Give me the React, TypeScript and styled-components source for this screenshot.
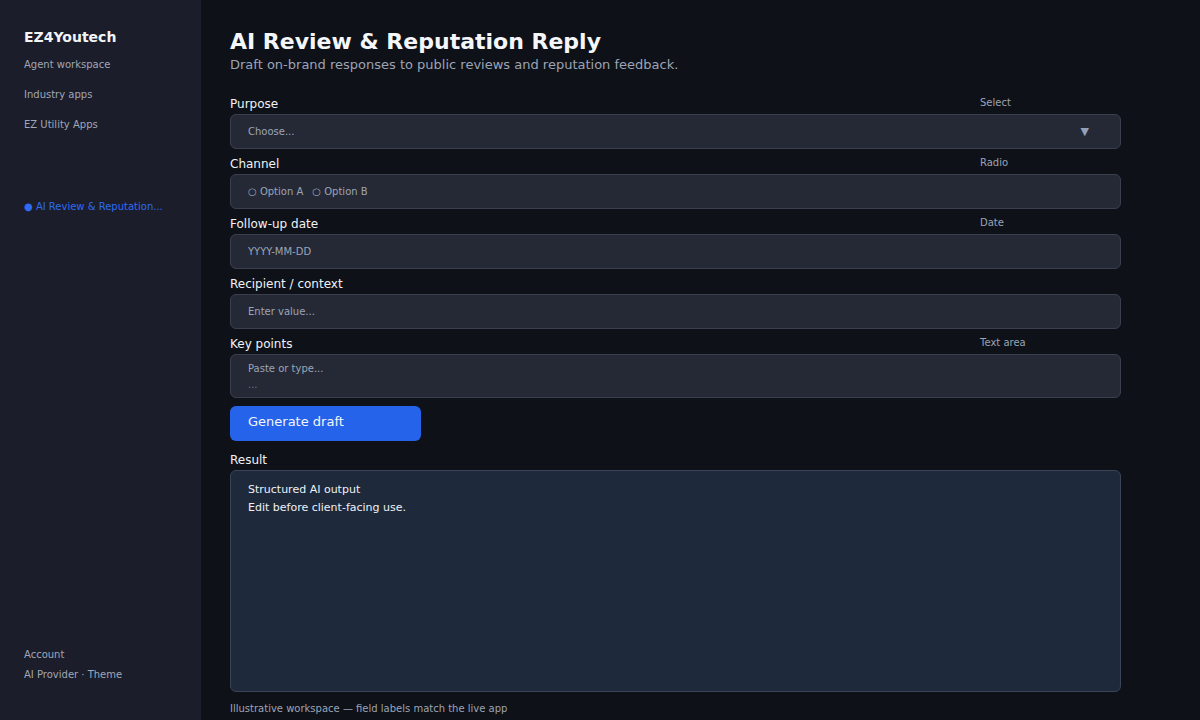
import styled, { createGlobalStyle } from 'styled-components';

const GlobalStyle = createGlobalStyle`
  html, body {
    margin: 0;
    padding: 0;
    background: #0e1118;
  }
  * {
    box-sizing: border-box;
  }
  body {
    font-family: "DejaVu Sans", "Liberation Sans", sans-serif;
    color: #e8eaf0;
  }
`;

const NavLinks = ['Agent workspace', 'Industry apps', 'EZ Utility Apps'];

type FieldDef = {
  label: string;
  kind: string;
  placeholder?: string;
  variant: 'select' | 'radio' | 'input' | 'textarea';
};

const Fields: FieldDef[] = [
  { label: 'Purpose', kind: 'Select', placeholder: 'Choose...', variant: 'select' },
  { label: 'Channel', kind: 'Radio', variant: 'radio' },
  { label: 'Follow-up date', kind: 'Date', placeholder: 'YYYY-MM-DD', variant: 'input' },
  { label: 'Recipient / context', kind: '', placeholder: 'Enter value...', variant: 'input' },
  { label: 'Key points', kind: 'Text area', placeholder: 'Paste or type...', variant: 'textarea' },
];

const FieldControl = ({ field }: { field: FieldDef }) => {
  if (field.variant === 'select') {
    return (
      <_Box>
        <_Placeholder>{field.placeholder}</_Placeholder>
        <_Arrow>▼</_Arrow>
      </_Box>
    );
  }
  if (field.variant === 'radio') {
    return (
      <_Box>
        <_RadioGroup>
          <_Radio>○ Option A</_Radio>
          <_Radio>○ Option B</_Radio>
        </_RadioGroup>
      </_Box>
    );
  }
  if (field.variant === 'textarea') {
    return (
      <_TextArea>
        <_Placeholder>{field.placeholder}</_Placeholder>
        <_Placeholder $dim>...</_Placeholder>
      </_TextArea>
    );
  }
  return (
    <_Box>
      <_Placeholder>{field.placeholder}</_Placeholder>
    </_Box>
  );
};

const App = () => {
  return (
    <_Layout>
      <GlobalStyle />
      <_Sidebar>
        <_Brand>EZ4Youtech</_Brand>
        {NavLinks.map((link) => (
          <_NavItem key={link}>{link}</_NavItem>
        ))}
        <_ActiveItem>● AI Review &amp; Reputation...</_ActiveItem>
        <_SidebarFooter>
          <_FooterLink>Account</_FooterLink>
          <_FooterLink>AI Provider · Theme</_FooterLink>
        </_SidebarFooter>
      </_Sidebar>
      <_Main>
        <_Title>AI Review &amp; Reputation Reply</_Title>
        <_Subtitle>Draft on-brand responses to public reviews and reputation feedback.</_Subtitle>
        <_Form>
          {Fields.map((field) => (
            <_Field key={field.label}>
              <_LabelRow>
                <_Label>{field.label}</_Label>
                <_Kind>{field.kind}</_Kind>
              </_LabelRow>
              <FieldControl field={field} />
            </_Field>
          ))}
          <_Button>Generate draft</_Button>
          <_Field>
            <_LabelRow>
              <_Label>Result</_Label>
            </_LabelRow>
            <_Result>
              <div>Structured AI output</div>
              <div>Edit before client-facing use.</div>
            </_Result>
          </_Field>
          <_Note>Illustrative workspace — field labels match the live app</_Note>
        </_Form>
      </_Main>
    </_Layout>
  );
};

export default App;

const _Layout = styled.div`
  display: flex;
  width: 1200px;
  height: 720px;
  overflow: hidden;
`;

const _Sidebar = styled.aside`
  width: 201px;
  flex-shrink: 0;
  background: #1b1d2a;
  padding: 28px 24px 35px;
  display: flex;
  flex-direction: column;
`;

const _Brand = styled.div`
  font-size: 14px;
  font-weight: bold;
  line-height: 18px;
  color: #f2f4f8;
  margin-bottom: 4px;
`;

const _NavItem = styled.div`
  font-size: 10px;
  line-height: 30px;
  color: #a0a7b6;
`;

const _ActiveItem = styled.div`
  margin-top: 52px;
  font-size: 10px;
  line-height: 30px;
  color: #2f6bf0;
  white-space: nowrap;
`;

const _SidebarFooter = styled.div`
  margin-top: auto;
  display: flex;
  flex-direction: column;
`;

const _FooterLink = styled.div`
  font-size: 10px;
  line-height: 20px;
  color: #a0a7b6;
`;

const _Main = styled.main`
  flex: 1;
  padding: 29px 0 0 29px;
`;

const _Title = styled.h1`
  margin: 0;
  font-size: 22px;
  line-height: 26px;
  font-weight: bold;
  color: #f4f6fa;
`;

const _Subtitle = styled.p`
  margin: 1px 0 0;
  font-size: 13px;
  line-height: 18px;
  color: #9ca4b5;
`;

const _Form = styled.div`
  width: 891px;
  margin-top: 21px;
  display: flex;
  flex-direction: column;
  gap: 6px;
`;

const _Field = styled.div`
  display: flex;
  flex-direction: column;
  gap: 3px;
`;

const _LabelRow = styled.div`
  display: flex;
  justify-content: space-between;
  align-items: center;
  height: 16px;
`;

const _Label = styled.span`
  padding-top: 2px;
  font-size: 12px;
  color: #f0f2f6;
`;

const _Kind = styled.span`
  width: 141px;
  font-size: 10px;
  color: #9ca4b5;
  margin-top: -2px;
`;

const _Box = styled.div`
  height: 35px;
  display: flex;
  align-items: center;
  justify-content: space-between;
  padding: 0 31px 0 17px;
  background: #252935;
  border: 1px solid #3a3f4d;
  border-radius: 6px;
`;

const _TextArea = styled.div`
  height: 44px;
  padding: 6px 17px;
  background: #252935;
  border: 1px solid #3a3f4d;
  border-radius: 6px;
  display: flex;
  flex-direction: column;
`;

const _Placeholder = styled.span<{ $dim?: boolean }>`
  font-size: 10px;
  line-height: 16px;
  color: ${({ $dim }) => ($dim ? '#6b7282' : '#9ca4b5')};
`;

const _Arrow = styled.span`
  font-size: 11px;
  color: #94a0b8;
`;

const _RadioGroup = styled.div`
  display: flex;
  gap: 9px;
`;

const _Radio = styled.span`
  font-size: 10px;
  color: #9ca4b5;
`;

const _Button = styled.button`
  width: 191px;
  height: 35px;
  margin-top: 2px;
  margin-bottom: 4px;
  padding: 0 18px 4px;
  text-align: left;
  font-family: inherit;
  font-size: 13px;
  color: #f4f6fa;
  background: #2563eb;
  border: none;
  border-radius: 6px;
`;

const _Result = styled.div`
  height: 222px;
  padding: 10px 17px;
  background: #1e293b;
  border: 1px solid #3b4456;
  border-radius: 6px;
  font-size: 11px;
  line-height: 18px;
  color: #eef1f6;
`;

const _Note = styled.div`
  margin-top: 3px;
  font-size: 10px;
  line-height: 16px;
  color: #9ca4b5;
`;
